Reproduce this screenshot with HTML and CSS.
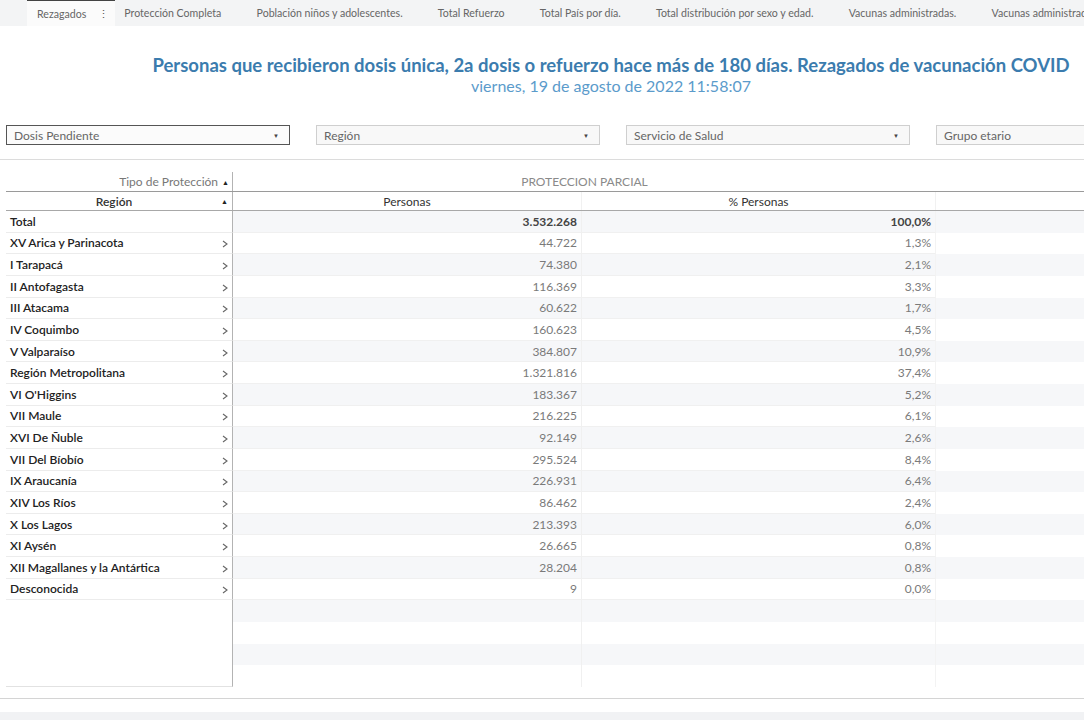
FILE: index.html
```html
<!DOCTYPE html>
<html lang="es">
<head>
<meta charset="utf-8">
<title>Rezagados</title>
<link rel="stylesheet" href="styles.css">
</head>
<body>
<div class="page">
  <nav class="tabbar">
    <div class="tab active"><span>Rezagados</span><span class="kebab">⋮</span></div>
    <div class="tab first">Protección Completa</div>
    <div class="tab">Población niños y adolescentes.</div>
    <div class="tab">Total Refuerzo</div>
    <div class="tab">Total País por día.</div>
    <div class="tab">Total distribución por sexo y edad.</div>
    <div class="tab">Vacunas administradas.</div>
    <div class="tab">Vacunas administradas por región.</div>
  </nav>

  <header class="heading">
    <h1 class="title">Personas que recibieron dosis única, 2a dosis o refuerzo hace más de 180 días. Rezagados de vacunación COVID</h1>
    <p class="subtitle">viernes, 19 de agosto de 2022 11:58:07</p>
  </header>

  <div class="filters">
    <div class="select focus"><span>Dosis Pendiente</span><span class="caret">▼</span></div>
    <div class="select"><span>Región</span><span class="caret">▼</span></div>
    <div class="select"><span>Servicio de Salud</span><span class="caret">▼</span></div>
    <div class="select"><span>Grupo etario</span><span class="caret">▼</span></div>
  </div>

  <div class="separator"></div>

  <div class="crosstab">
    <div class="row head1">
      <div class="c0 hcell-right">Tipo de Protección <span class="sort">▲</span></div>
      <div class="span12">PROTECCION PARCIAL</div>
      <div class="c3"></div>
    </div>
    <div class="row head2">
      <div class="c0 region-head"><span>Región</span><span class="sort abs">▲</span></div>
      <div class="c1 colhead">Personas</div>
      <div class="c2 colhead">% Personas</div>
      <div class="c3"></div>
    </div>

    <div class="row data alt total">
      <div class="c0"><span class="name">Total</span></div>
      <div class="c1 num">3.532.268</div>
      <div class="c2 num">100,0%</div>
      <div class="c3"></div>
    </div>
    <div class="row data">
      <div class="c0"><span class="name">XV Arica y Parinacota</span><svg class="chev" viewBox="0 0 6 8" width="6" height="8"><polyline points="1,1 5,4 1,7"/></svg></div>
      <div class="c1 num">44.722</div><div class="c2 num">1,3%</div><div class="c3"></div>
    </div>
    <div class="row data alt">
      <div class="c0"><span class="name">I Tarapacá</span><svg class="chev" viewBox="0 0 6 8" width="6" height="8"><polyline points="1,1 5,4 1,7"/></svg></div>
      <div class="c1 num">74.380</div><div class="c2 num">2,1%</div><div class="c3"></div>
    </div>
    <div class="row data">
      <div class="c0"><span class="name">II Antofagasta</span><svg class="chev" viewBox="0 0 6 8" width="6" height="8"><polyline points="1,1 5,4 1,7"/></svg></div>
      <div class="c1 num">116.369</div><div class="c2 num">3,3%</div><div class="c3"></div>
    </div>
    <div class="row data alt">
      <div class="c0"><span class="name">III Atacama</span><svg class="chev" viewBox="0 0 6 8" width="6" height="8"><polyline points="1,1 5,4 1,7"/></svg></div>
      <div class="c1 num">60.622</div><div class="c2 num">1,7%</div><div class="c3"></div>
    </div>
    <div class="row data">
      <div class="c0"><span class="name">IV Coquimbo</span><svg class="chev" viewBox="0 0 6 8" width="6" height="8"><polyline points="1,1 5,4 1,7"/></svg></div>
      <div class="c1 num">160.623</div><div class="c2 num">4,5%</div><div class="c3"></div>
    </div>
    <div class="row data alt">
      <div class="c0"><span class="name">V Valparaíso</span><svg class="chev" viewBox="0 0 6 8" width="6" height="8"><polyline points="1,1 5,4 1,7"/></svg></div>
      <div class="c1 num">384.807</div><div class="c2 num">10,9%</div><div class="c3"></div>
    </div>
    <div class="row data">
      <div class="c0"><span class="name">Región Metropolitana</span><svg class="chev" viewBox="0 0 6 8" width="6" height="8"><polyline points="1,1 5,4 1,7"/></svg></div>
      <div class="c1 num">1.321.816</div><div class="c2 num">37,4%</div><div class="c3"></div>
    </div>
    <div class="row data alt">
      <div class="c0"><span class="name">VI O'Higgins</span><svg class="chev" viewBox="0 0 6 8" width="6" height="8"><polyline points="1,1 5,4 1,7"/></svg></div>
      <div class="c1 num">183.367</div><div class="c2 num">5,2%</div><div class="c3"></div>
    </div>
    <div class="row data">
      <div class="c0"><span class="name">VII Maule</span><svg class="chev" viewBox="0 0 6 8" width="6" height="8"><polyline points="1,1 5,4 1,7"/></svg></div>
      <div class="c1 num">216.225</div><div class="c2 num">6,1%</div><div class="c3"></div>
    </div>
    <div class="row data alt">
      <div class="c0"><span class="name">XVI De Ñuble</span><svg class="chev" viewBox="0 0 6 8" width="6" height="8"><polyline points="1,1 5,4 1,7"/></svg></div>
      <div class="c1 num">92.149</div><div class="c2 num">2,6%</div><div class="c3"></div>
    </div>
    <div class="row data">
      <div class="c0"><span class="name">VII Del Bíobío</span><svg class="chev" viewBox="0 0 6 8" width="6" height="8"><polyline points="1,1 5,4 1,7"/></svg></div>
      <div class="c1 num">295.524</div><div class="c2 num">8,4%</div><div class="c3"></div>
    </div>
    <div class="row data alt">
      <div class="c0"><span class="name">IX Araucanía</span><svg class="chev" viewBox="0 0 6 8" width="6" height="8"><polyline points="1,1 5,4 1,7"/></svg></div>
      <div class="c1 num">226.931</div><div class="c2 num">6,4%</div><div class="c3"></div>
    </div>
    <div class="row data">
      <div class="c0"><span class="name">XIV Los Ríos</span><svg class="chev" viewBox="0 0 6 8" width="6" height="8"><polyline points="1,1 5,4 1,7"/></svg></div>
      <div class="c1 num">86.462</div><div class="c2 num">2,4%</div><div class="c3"></div>
    </div>
    <div class="row data alt">
      <div class="c0"><span class="name">X Los Lagos</span><svg class="chev" viewBox="0 0 6 8" width="6" height="8"><polyline points="1,1 5,4 1,7"/></svg></div>
      <div class="c1 num">213.393</div><div class="c2 num">6,0%</div><div class="c3"></div>
    </div>
    <div class="row data">
      <div class="c0"><span class="name">XI Aysén</span><svg class="chev" viewBox="0 0 6 8" width="6" height="8"><polyline points="1,1 5,4 1,7"/></svg></div>
      <div class="c1 num">26.665</div><div class="c2 num">0,8%</div><div class="c3"></div>
    </div>
    <div class="row data alt">
      <div class="c0"><span class="name">XII Magallanes y la Antártica</span><svg class="chev" viewBox="0 0 6 8" width="6" height="8"><polyline points="1,1 5,4 1,7"/></svg></div>
      <div class="c1 num">28.204</div><div class="c2 num">0,8%</div><div class="c3"></div>
    </div>
    <div class="row data">
      <div class="c0"><span class="name">Desconocida</span><svg class="chev" viewBox="0 0 6 8" width="6" height="8"><polyline points="1,1 5,4 1,7"/></svg></div>
      <div class="c1 num">9</div><div class="c2 num">0,0%</div><div class="c3"></div>
    </div>

    <div class="row data empty alt"><div class="c0"></div><div class="c1"></div><div class="c2"></div><div class="c3"></div></div>
    <div class="row data empty"><div class="c0"></div><div class="c1"></div><div class="c2"></div><div class="c3"></div></div>
    <div class="row data empty alt"><div class="c0"></div><div class="c1"></div><div class="c2"></div><div class="c3"></div></div>
    <div class="row data empty last"><div class="c0"></div><div class="c1"></div><div class="c2"></div><div class="c3"></div></div>
  </div>

  <div class="footer-line"></div>
  <div class="footer-band"></div>
</div>
</body>
</html>
```

FILE: styles.css
```css
html, body {
  margin: 0;
  padding: 0;
  background: #ffffff;
  overflow: hidden;
}

.page {
  width: 1226px;
  height: 720px;
  font-family: Lato, "Open Sans", "Liberation Sans", sans-serif;
  color: #333;
  overflow: hidden;
}

/* Tabs */
.tabbar {
  height: 26px;
  background: #f3f4f5;
  display: flex;
  align-items: stretch;
  font-size: 10.6px;
  color: #666;
  white-space: nowrap;
}

.tab {
  display: flex;
  align-items: center;
  padding: 0 17.6px;
}

.tab.first {
  padding-left: 9px;
}

.tab.active {
  margin-left: 27px;
  padding: 0 6px 0 10px;
  background: #fbfbfb;
  border-top: 1px solid #444;
  box-sizing: border-box;
}

.kebab {
  margin-left: 12px;
  font-size: 11px;
  color: #555;
}

/* Heading */
.heading {
  text-align: center;
  padding-top: 28px;
  padding-right: 4px;
}

.title {
  margin: 0;
  font-size: 18.5px;
  line-height: 22px;
  font-weight: 700;
  color: #3b7cae;
}

.subtitle {
  margin: 0;
  font-size: 16px;
  line-height: 20px;
  color: #5b9bcb;
}

/* Filters */
.filters {
  display: flex;
  gap: 26px;
  padding-left: 6px;
  margin-top: 29px;
}

.select {
  width: 284px;
  height: 20px;
  box-sizing: border-box;
  border: 1px solid #cfcfcf;
  background: #f8f8f8;
  display: flex;
  align-items: center;
  justify-content: space-between;
  padding: 0 10px 0 7px;
  font-size: 12px;
  color: #666;
}

.select.focus {
  border-color: #555;
  background: #fbfbfb;
}

.caret {
  font-size: 6px;
  color: #444;
}

.separator {
  margin-top: 14px;
  height: 1px;
  background: #dcdcdc;
}

/* Crosstab */
.crosstab {
  margin-top: 12px;
  margin-left: 6px;
  font-size: 12px;
}

.row {
  display: grid;
  grid-template-columns: 227px 349px 354px 1fr;
}

.c0 {
  border-right: 1px solid #b3b3b3;
  position: relative;
}

.head1 {
  height: 19px;
  border-bottom: 1px solid #9a9a9a;
  color: #777;
}

.head1 .hcell-right {
  display: flex;
  align-items: center;
  justify-content: flex-end;
  padding-right: 3px;
}

.sort {
  font-size: 7px;
  color: #222;
  margin-left: 4px;
}

.span12 {
  grid-column: 2 / span 2;
  display: flex;
  align-items: center;
  justify-content: center;
  font-size: 12px;
  color: #8a8a8a;
}

.head2 {
  height: 18px;
  border-bottom: 1px solid #a8a8a8;
  color: #333;
}

.region-head {
  display: flex;
  align-items: center;
  justify-content: center;
  padding-right: 10px;
  font-weight: 600;
  color: #333;
}

.sort.abs {
  position: absolute;
  right: 4px;
  top: 5px;
  margin: 0;
}

.colhead {
  display: flex;
  align-items: center;
  justify-content: center;
  border-right: 1px solid #f1f1f1;
  font-size: 12px;
  color: #333;
}

.data {
  height: 21.64px;
}

.data .c0 {
  display: flex;
  align-items: center;
  justify-content: space-between;
  padding: 0 4px 0 4px;
  border-bottom: 1px solid #ececec;
  box-sizing: border-box;
}

.data.empty .c0 {
  border-bottom: none;
}

.data.empty.last .c0 {
  border-bottom: 1px solid #e2e2e2;
}

.name {
  font-weight: 600;
  color: #222;
  font-size: 12px;
}

.chev {
  fill: none;
  stroke: #666;
  stroke-width: 1.1;
  margin-top: 3px;
}

.num {
  display: flex;
  align-items: center;
  justify-content: flex-end;
  padding-right: 4px;
  color: #7a7a7a;
  border-bottom: 1px solid #f0f0f0;
  box-sizing: border-box;
}

.data .c1 {
  border-right: 1px solid #f0f0f0;
}

.data .c2 {
  border-right: 1px solid #f3f3f3;
}

.data.alt .c1,
.data.alt .c2,
.data.alt .c3 {
  background: #f6f7f9;
}

.total .num {
  font-weight: 700;
  color: #444;
}

.footer-line {
  margin-top: 11px;
  height: 1px;
  background: #d4d4d4;
}

.footer-band {
  margin-top: 13px;
  height: 8px;
  background: #f1f2f4;
}
```
